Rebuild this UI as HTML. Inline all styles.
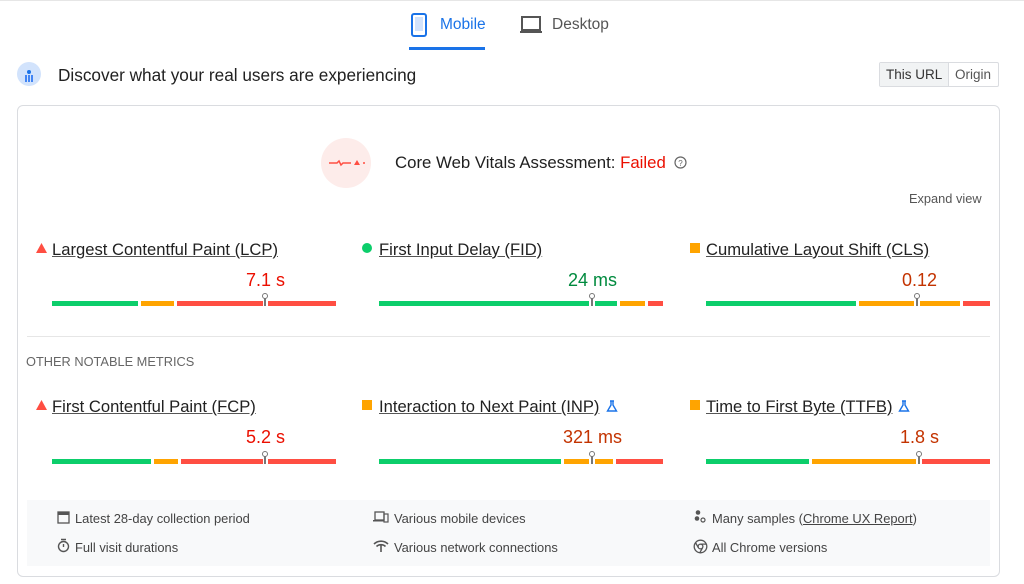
<!DOCTYPE html>
<html><head><meta charset="utf-8"><style>
*{margin:0;padding:0;box-sizing:border-box}
body{width:1024px;height:584px;background:#fff;font-family:"Liberation Sans",Arial,sans-serif;position:relative;overflow:hidden;color:#212121}
.a{position:absolute;white-space:nowrap}
.seg{position:absolute;height:5px}
.g{background:#0cce6b}.o{background:#ffa400}.r{background:#ff4e42}
.mk{position:absolute;width:2px;height:9px;background:#777}
.mk:before{content:"";position:absolute;left:-2px;top:-4px;width:6px;height:6px;border:1px solid #777;border-radius:50%;background:#fff;box-sizing:border-box}
.ttl{font-size:16.6px;color:#212121;text-decoration:underline;text-decoration-color:#555}
.val{font-size:18px;text-align:right}
.ft{font-size:12.9px;color:#444}
</style></head><body>
<div class="a" style="left:0;top:0;width:1024px;height:1px;background:#e6e6e6"></div>
<!-- tabs -->
<svg class="a" style="left:410px;top:13px" width="18" height="24" viewBox="0 0 18 24"><rect x="2" y="1" width="14" height="22" rx="2" fill="none" stroke="#1a73e8" stroke-width="2"/><rect x="5" y="4" width="8" height="14" fill="#d2e3fc"/></svg>
<div class="a" style="left:440px;top:16px;font-size:15.5px;color:#1a73e8">Mobile</div>
<div class="a" style="left:409px;top:47px;width:76px;height:3px;background:#1a73e8"></div>
<svg class="a" style="left:519px;top:15px" width="24" height="20" viewBox="0 0 24 20"><rect x="3" y="2" width="18" height="13" fill="none" stroke="#555" stroke-width="2"/><rect x="1" y="16" width="22" height="2" fill="#555"/></svg>
<div class="a" style="left:552px;top:16px;font-size:15.5px;color:#555">Desktop</div>
<!-- discover -->
<div class="a" style="left:17px;top:62px;width:24px;height:24px;border-radius:50%;background:#d2e3fc"></div>
<svg class="a" style="left:17px;top:62px" width="24" height="24"><circle cx="12" cy="10" r="2" fill="#1a73e8"/><rect x="8" y="13" width="2" height="7" fill="#4285f4"/><rect x="11" y="13" width="2" height="7" fill="#4285f4"/><rect x="14" y="13" width="2" height="7" fill="#4285f4"/></svg>
<div class="a" style="left:58px;top:65px;font-size:17.2px;color:#212121">Discover what your real users are experiencing</div>
<div class="a" style="left:879px;top:62px;width:120px;height:25px;border:1px solid #dadce0;border-radius:2px"></div>
<div class="a" style="left:880px;top:63px;width:69px;height:23px;background:#f1f3f4;border-right:1px solid #dadce0"></div>
<div class="a" style="left:886px;top:67px;font-size:13.5px;color:#333">This URL</div>
<div class="a" style="left:955px;top:67px;font-size:13.5px;color:#555">Origin</div>
<!-- card -->
<div class="a" style="left:17px;top:105px;width:983px;height:472px;border:1px solid #dadce0;border-radius:6px"></div>
<div class="a" style="left:321px;top:138px;width:50px;height:50px;border-radius:50%;background:#fdecea"></div>
<svg class="a" style="left:321px;top:138px" width="50" height="50"><path d="M8 25h8l2-2 2 4 2-2h8" stroke="#ff4e42" stroke-width="1.5" fill="none"/><path d="M33 27l3-5 3 5z" fill="#ff4e42"/><circle cx="43" cy="25" r="1" fill="#ff4e42"/></svg>
<div class="a" style="left:395px;top:153px;font-size:16.8px">Core Web Vitals Assessment: <span style="color:#eb0f00">Failed</span></div>
<svg class="a" style="left:674px;top:156px" width="13" height="13"><circle cx="6.5" cy="6.5" r="5.5" fill="none" stroke="#666" stroke-width="1.2"/><text x="6.5" y="10" font-size="8" text-anchor="middle" fill="#666" font-family="Liberation Sans">?</text></svg>
<div class="a" style="left:909px;top:191px;font-size:12.8px;color:#555">Expand view</div>

<!-- row 1 -->
<svg class="a" style="left:36px;top:243px" width="11" height="10"><path d="M5.5 0L11 10H0z" fill="#ff4e42"/></svg>
<div class="a ttl" style="left:52px;top:240px">Largest Contentful Paint (LCP)</div>
<div class="a" style="left:362px;top:243px;width:10px;height:10px;border-radius:50%;background:#0cce6b"></div>
<div class="a ttl" style="left:379px;top:240px">First Input Delay (FID)</div>
<div class="a" style="left:690px;top:243px;width:10px;height:10px;background:#ffa400"></div>
<div class="a ttl" style="left:706px;top:240px">Cumulative Layout Shift (CLS)</div>
<div class="a val" style="right:739px;top:270px;color:#eb0f00">7.1 s</div>
<div class="a val" style="right:407px;top:270px;color:#008a3e">24 ms</div>
<div class="a val" style="right:87px;top:270px;color:#c33300">0.12</div>

<div class="seg g" style="left:52px;top:301px;width:86px"></div><div class="seg o" style="left:141px;top:301px;width:33px"></div><div class="seg r" style="left:177px;top:301px;width:86px"></div><div class="mk" style="left:264px;top:297px"></div><div class="seg r" style="left:268px;top:301px;width:68px"></div>
<div class="seg g" style="left:379px;top:301px;width:210px"></div><div class="mk" style="left:591px;top:297px"></div><div class="seg g" style="left:595px;top:301px;width:22px"></div><div class="seg o" style="left:620px;top:301px;width:25px"></div><div class="seg r" style="left:648px;top:301px;width:15px"></div>
<div class="seg g" style="left:706px;top:301px;width:150px"></div><div class="seg o" style="left:859px;top:301px;width:55px"></div><div class="mk" style="left:916px;top:297px"></div><div class="seg o" style="left:920px;top:301px;width:40px"></div><div class="seg r" style="left:963px;top:301px;width:27px"></div>

<div class="a" style="left:27px;top:336px;width:963px;height:1px;background:#e6e6e6"></div>
<div class="a" style="left:26px;top:354px;font-size:12.8px;color:#666">OTHER NOTABLE METRICS</div>

<!-- row 2 -->
<svg class="a" style="left:36px;top:400px" width="11" height="10"><path d="M5.5 0L11 10H0z" fill="#ff4e42"/></svg>
<div class="a ttl" style="left:52px;top:397px">First Contentful Paint (FCP)</div>
<div class="a" style="left:362px;top:400px;width:10px;height:10px;background:#ffa400"></div>
<div class="a ttl" style="left:379px;top:397px">Interaction to Next Paint (INP)</div>
<svg class="a" style="left:606px;top:400px" width="12" height="12"><path d="M4 1h4M5 1v4L1.5 11h9L7 5V1" fill="none" stroke="#1a73e8" stroke-width="1.4"/></svg>
<div class="a" style="left:690px;top:400px;width:10px;height:10px;background:#ffa400"></div>
<div class="a ttl" style="left:706px;top:397px">Time to First Byte (TTFB)</div>
<svg class="a" style="left:898px;top:400px" width="12" height="12"><path d="M4 1h4M5 1v4L1.5 11h9L7 5V1" fill="none" stroke="#1a73e8" stroke-width="1.4"/></svg>
<div class="a val" style="right:739px;top:427px;color:#eb0f00">5.2 s</div>
<div class="a val" style="right:402px;top:427px;color:#c33300">321 ms</div>
<div class="a val" style="right:85px;top:427px;color:#c33300">1.8 s</div>

<div class="seg g" style="left:52px;top:459px;width:99px"></div><div class="seg o" style="left:154px;top:459px;width:24px"></div><div class="seg r" style="left:181px;top:459px;width:82px"></div><div class="mk" style="left:264px;top:455px"></div><div class="seg r" style="left:268px;top:459px;width:68px"></div>
<div class="seg g" style="left:379px;top:459px;width:182px"></div><div class="seg o" style="left:564px;top:459px;width:25px"></div><div class="mk" style="left:591px;top:455px"></div><div class="seg o" style="left:595px;top:459px;width:18px"></div><div class="seg r" style="left:616px;top:459px;width:47px"></div>
<div class="seg g" style="left:706px;top:459px;width:103px"></div><div class="seg o" style="left:812px;top:459px;width:104px"></div><div class="mk" style="left:918px;top:455px"></div><div class="seg r" style="left:922px;top:459px;width:68px"></div>

<!-- footer -->
<div class="a" style="left:27px;top:500px;width:963px;height:66px;background:#f8f9fa"></div>
<svg class="a" style="left:57px;top:510px" width="13" height="14"><rect x="1" y="2" width="11" height="11" fill="none" stroke="#555" stroke-width="1.3"/><rect x="1" y="2" width="11" height="3" fill="#555"/></svg>
<div class="a ft" style="left:75px;top:511px">Latest 28-day collection period</div>
<svg class="a" style="left:57px;top:538px" width="13" height="15"><circle cx="6.5" cy="8.5" r="5" fill="none" stroke="#555" stroke-width="1.4"/><path d="M4 1.5h5M6.5 6v3" stroke="#555" stroke-width="1.4"/></svg>
<div class="a ft" style="left:75px;top:540px">Full visit durations</div>
<svg class="a" style="left:373px;top:510px" width="16" height="13"><rect x="2" y="2" width="9" height="8" fill="none" stroke="#555" stroke-width="1.3"/><rect x="0" y="10" width="11" height="1.5" fill="#555"/><rect x="11" y="4" width="4" height="8" fill="none" stroke="#555" stroke-width="1.2"/></svg>
<div class="a ft" style="left:394px;top:511px">Various mobile devices</div>
<svg class="a" style="left:373px;top:539px" width="16" height="13"><path d="M1 5a10 10 0 0 1 14 0M3.5 7.5a6.5 6.5 0 0 1 9 0" fill="none" stroke="#555" stroke-width="1.6"/><path d="M8 6v7" stroke="#555" stroke-width="1.6"/></svg>
<div class="a ft" style="left:394px;top:540px">Various network connections</div>
<svg class="a" style="left:693px;top:509px" width="14" height="14"><circle cx="5" cy="3.5" r="2.3" fill="#555"/><circle cx="4" cy="9.5" r="2.3" fill="#555"/><circle cx="10" cy="11" r="2" fill="none" stroke="#555" stroke-width="1.2"/></svg>
<div class="a ft" style="left:712px;top:511px">Many samples (<span style="text-decoration:underline">Chrome UX Report</span>)</div>
<svg class="a" style="left:693px;top:539px" width="15" height="15"><circle cx="7.5" cy="7.5" r="6.3" fill="none" stroke="#555" stroke-width="1.3"/><circle cx="7.5" cy="7.5" r="2.4" fill="none" stroke="#555" stroke-width="1.3"/><path d="M7.5 5.1h5.5M5.4 8.7L2.7 4M9.6 8.7l-2.7 4.9" stroke="#555" stroke-width="1.3"/></svg>
<div class="a ft" style="left:712px;top:540px">All Chrome versions</div>
</body></html>
